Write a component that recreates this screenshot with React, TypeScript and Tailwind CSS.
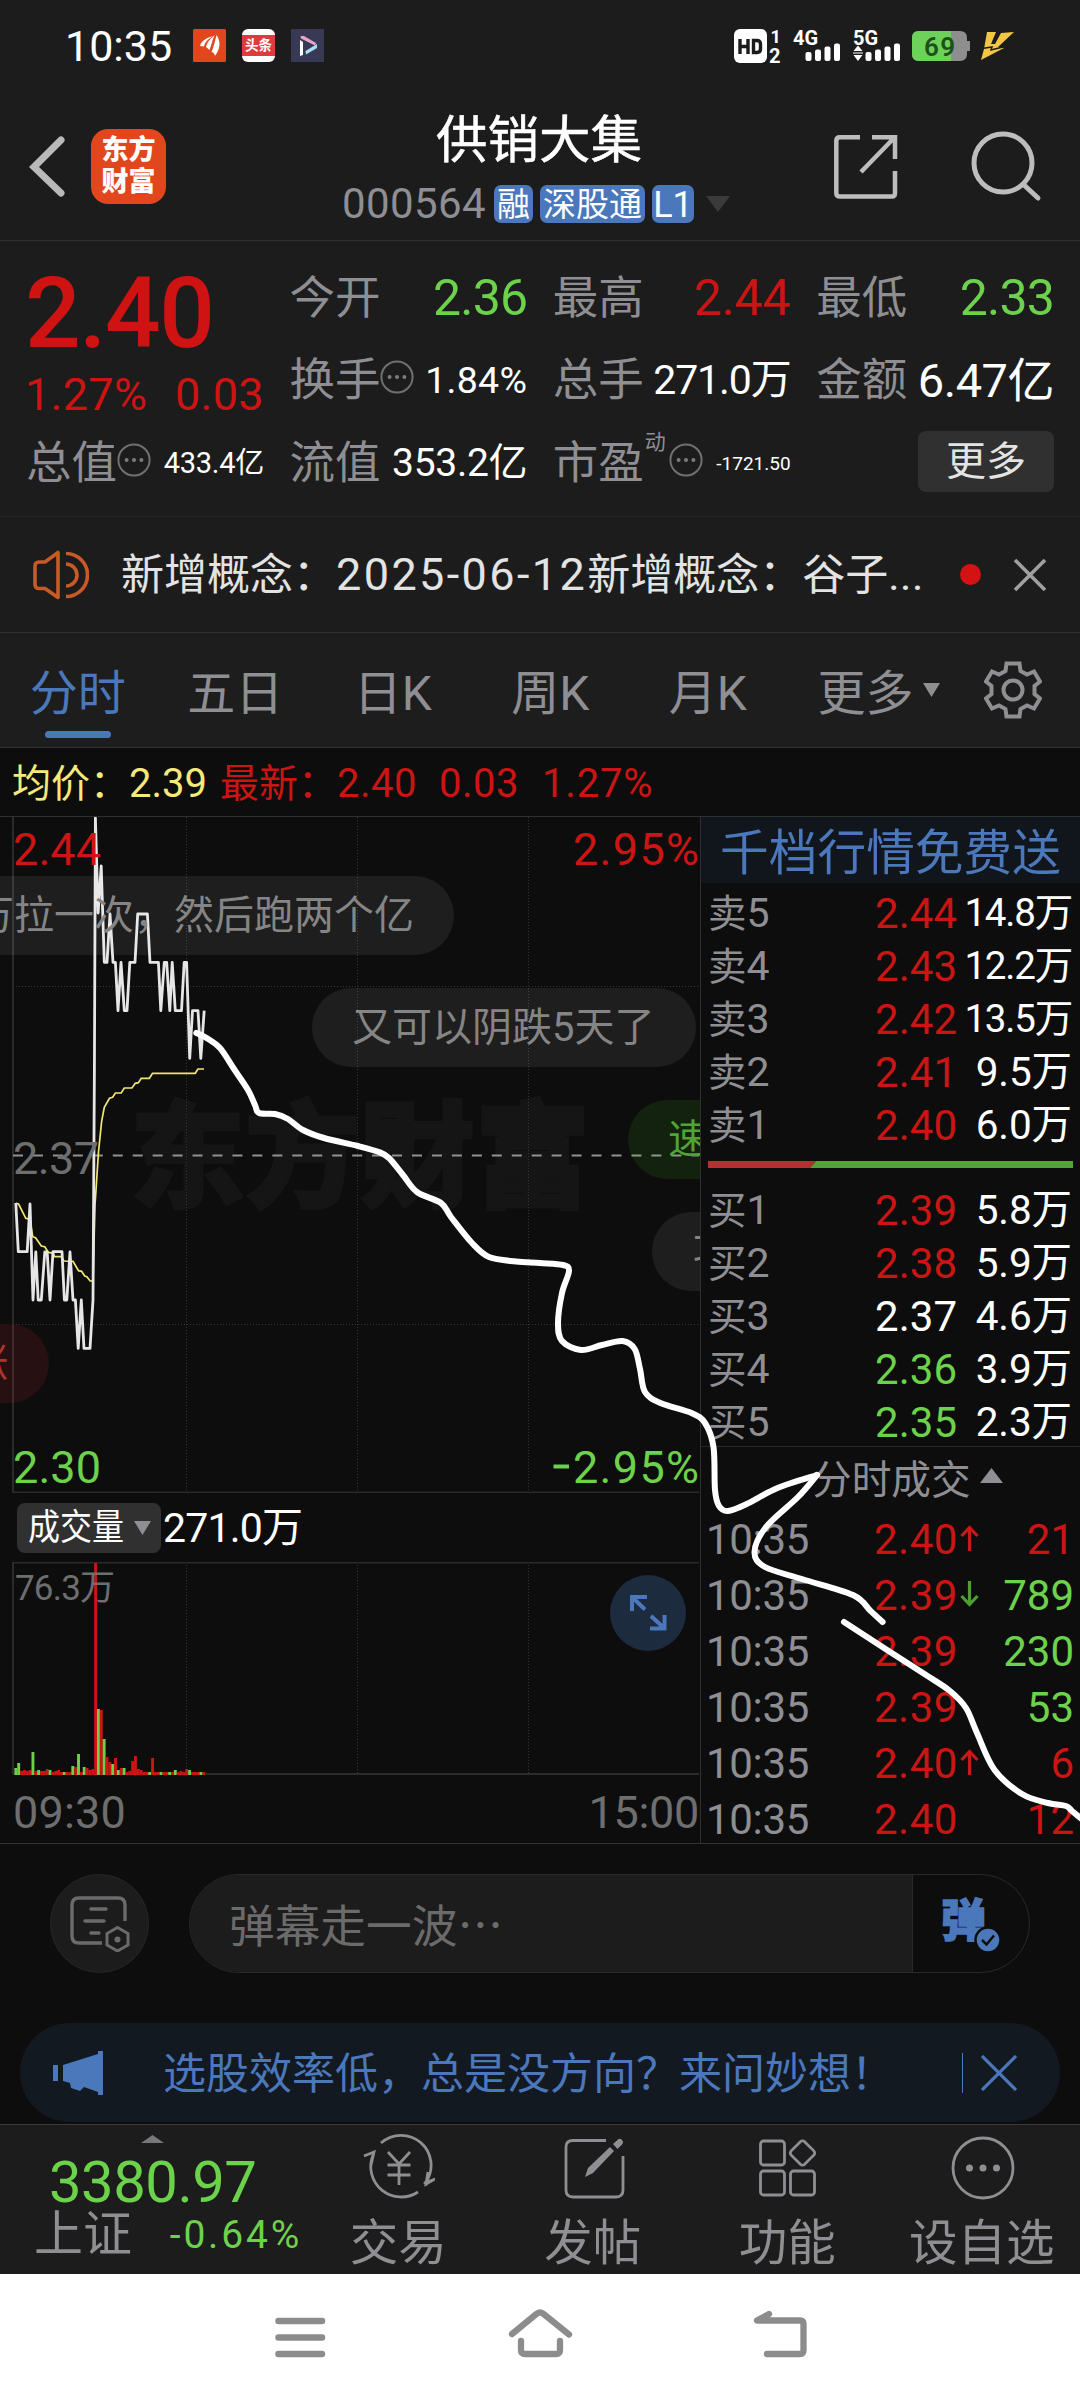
import React from 'react';

type Tone = 'red' | 'green' | 'white';

interface BookRow {
  label: string;
  price: string;
  volume: string;
  tone: Tone;
}

interface Trade {
  time: string;
  price: string;
  tone: Tone;
  dir?: 'up' | 'down';
  qty: string;
  qtyTone: Tone;
}

const toneClass: Record<Tone, string> = {
  red: 'text-[#cb1514]',
  green: 'text-[#6dd24b]',
  white: 'text-white',
};

const asks: BookRow[] = [
  { label: '卖5', price: '2.44', volume: '14.8万', tone: 'red' },
  { label: '卖4', price: '2.43', volume: '12.2万', tone: 'red' },
  { label: '卖3', price: '2.42', volume: '13.5万', tone: 'red' },
  { label: '卖2', price: '2.41', volume: '9.5万', tone: 'red' },
  { label: '卖1', price: '2.40', volume: '6.0万', tone: 'red' },
];

const bids: BookRow[] = [
  { label: '买1', price: '2.39', volume: '5.8万', tone: 'red' },
  { label: '买2', price: '2.38', volume: '5.9万', tone: 'red' },
  { label: '买3', price: '2.37', volume: '4.6万', tone: 'white' },
  { label: '买4', price: '2.36', volume: '3.9万', tone: 'green' },
  { label: '买5', price: '2.35', volume: '2.3万', tone: 'green' },
];

const trades: Trade[] = [
  { time: '10:35', price: '2.40', tone: 'red', dir: 'up', qty: '21', qtyTone: 'red' },
  { time: '10:35', price: '2.39', tone: 'red', dir: 'down', qty: '789', qtyTone: 'green' },
  { time: '10:35', price: '2.39', tone: 'red', qty: '230', qtyTone: 'green' },
  { time: '10:35', price: '2.39', tone: 'red', qty: '53', qtyTone: 'green' },
  { time: '10:35', price: '2.40', tone: 'red', dir: 'up', qty: '6', qtyTone: 'red' },
  { time: '10:35', price: '2.40', tone: 'red', qty: '12', qtyTone: 'red' },
];

const tabs = ['分时', '五日', '日K', '周K', '月K'];

const priceLine =
  '15.8,1203 18.3,1251.7 27.2,1251.7 30,1204 33,1300 35.8,1252 38.2,1300 41.3,1300 44.8,1252 47.2,1252 50,1300 53,1251.7 62,1251.7 64.4,1300 66.8,1300 70,1252 73,1300 75.4,1300 78.2,1348.3 81.3,1300 84,1348.3 90,1348.3 93,1300 94.4,1070 95.4,818 98.1,913 101.2,866 104.3,962.3 107,962.3 110,914 113,962.3 115.4,962.3 118,1010.7 121,962.3 124.3,1010.7 127,1010.7 129.8,962.3 135,962.3 137.7,914 147.4,914 150,962.3 158.4,962.3 160.8,1010.7 164.3,962.3 166.7,962.3 169.8,1010.7 172.2,962.3 175.3,1010.7 181.5,1010.7 184.2,962.3 186.6,962.3 189.7,1058.3 192.5,1010.7 198,1010.7 200.8,1058.3 204.2,1010.7';

const averageLine =
  '15.8,1203.3 18.6,1204 22.4,1211.7 25.8,1218.3 30,1219.3 32.7,1236.7 35.5,1237.7 41.3,1246 44.8,1246.7 48.2,1252.3 53.4,1253.3 54.4,1256.7 61.3,1256.7 64,1261 73,1261.3 78.5,1270.7 81.6,1271.3 84.7,1276 86.8,1276.7 90.2,1281 93,1281 95,1205 98.5,1152 101.6,1121.7 104.3,1107.3 109.5,1098.3 112.6,1097.3 115.4,1093 121.2,1093 124.3,1088 131.9,1088 135.3,1083.3 138.4,1082.7 141.2,1078.3 149.4,1078.3 152.5,1073.3 195.2,1073.3 198,1069 204,1069';

// [height, rising]
const volumes: [number, boolean][] = [
  [7, false], [12, false], [4, true], [5, true], [4, true], [5, true], [23, false], [4, true], [5, false], [4, true],
  [4, true], [6, true], [5, false], [3, true], [4, true], [5, true], [3, true], [3, false], [3, true], [3, true],
  [9, false], [8, true], [21, false], [3, true], [8, false], [7, true], [5, true], [6, true], [212, true], [66, false],
  [65, true], [36, false], [18, true], [13, true], [11, false], [17, true], [5, false], [7, true], [7, false], [3, true],
  [4, true], [14, true], [19, true], [6, true], [5, true], [3, true], [3, true], [3, false], [17, true], [3, true],
  [3, true], [3, false], [3, true], [3, true], [3, false], [3, true], [5, false], [3, true], [4, true], [3, true],
  [6, true], [5, false], [3, true], [3, true], [3, true], [3, false], [3, true],
];

const strokes: [number, number][][] = [
  [
    [196.3, 1033], [206.6, 1038], [220, 1048], [234, 1069], [248, 1090], [255, 1105], [259, 1113], [275, 1114],
    [288, 1119], [303, 1130], [324, 1138], [358, 1146], [379, 1152], [389, 1158], [403, 1175], [417, 1192],
    [441, 1203], [451, 1217], [472, 1243], [489, 1257], [516, 1261.5], [540, 1263], [563, 1265], [569, 1271],
    [562, 1293], [558, 1323], [562, 1341], [581, 1350], [602, 1345], [622.6, 1341], [634.7, 1349], [640, 1369],
    [645, 1392], [660.5, 1403], [691.5, 1413], [705, 1423], [713.5, 1447], [715, 1490], [719, 1506], [728, 1511],
    [746.6, 1504], [777.6, 1488], [817, 1475],
  ],
  [
    [817, 1475], [798, 1497], [766, 1527], [754.5, 1552], [765, 1567], [802, 1579], [853, 1595], [870.6, 1611],
    [882.6, 1622],
  ],
  [
    [844, 1622], [884, 1648], [926, 1675], [950, 1691], [966, 1708], [977, 1733], [994.6, 1770], [1022, 1794],
    [1048, 1803], [1066, 1806], [1072, 1811], [1084, 1821],
  ],
];

const smoothPath = (pts: [number, number][]) => {
  let d = `M${pts[0][0]} ${pts[0][1]}`;
  for (let i = 0; i < pts.length - 1; i++) {
    const p0 = pts[i - 1] || pts[i];
    const p1 = pts[i];
    const p2 = pts[i + 1];
    const p3 = pts[i + 2] || p2;
    d += ` C${p1[0] + (p2[0] - p0[0]) / 6} ${p1[1] + (p2[1] - p0[1]) / 6} ${p2[0] - (p3[0] - p1[0]) / 6} ${p2[1] - (p3[1] - p1[1]) / 6} ${p2[0]} ${p2[1]}`;
  }
  return d;
};

const MoreDots = () => (
  <svg className="w-[34px] h-[34px] shrink-0 mb-[7px]" viewBox="0 0 34 34" fill="none">
    <circle cx="17" cy="17" r="15.6" stroke="#707072" strokeWidth="2" />
    <circle cx="9.6" cy="17" r="2" fill="#7c7c7f" />
    <circle cx="17" cy="17" r="2" fill="#7c7c7f" />
    <circle cx="24.4" cy="17" r="2" fill="#7c7c7f" />
  </svg>
);

const Signal = ({ label, data }: { label: string; data?: boolean }) => (
  <svg className="w-[49px] h-[34px] overflow-visible" viewBox="0 0 49 34" fill="#fff">
    <text x="0" y="15.5" fontSize="20" fontWeight="700" fontFamily="Roboto, sans-serif">
      {label}
    </text>
    {data && <path d="M0.5 22 L5 16.5 L9.5 22 Z M0.5 26 L5 32 L9.5 26 Z M0 23.5 h10 v1 h-10 Z" />}
    <rect x="12.5" y="23" width="6" height="9" rx="2" />
    <rect x="22" y="20.5" width="6" height="11.5" rx="2" />
    <rect x="31.5" y="17.5" width="6" height="14.5" rx="2" />
    <rect x="41" y="14.5" width="6" height="17.5" rx="2" />
  </svg>
);

const StatusBar = () => (
  <div className="h-[91px] flex items-center pl-[65px] text-white">
    <div className="w-[128px] pt-0.5 text-[43px] leading-none">10:35</div>
    <div className="flex gap-4">
      <svg className="w-[33px] h-[33px]" viewBox="0 0 33 33">
        <rect width="33" height="33" rx="1.5" fill="#e2461c" />
        <path d="M7 17 C8 12 14 8.5 20 7 C15 10.5 12 12.5 11 17.5 Z" fill="#fff" />
        <path d="M13 18 C14 13 18 9 22 6 C19 11 19 15 16.5 21 Z" fill="#fff" />
        <path d="M18.5 23 C21 17 22 12 23.5 6 C27 11 28.5 18 22 27 C21.5 25 21 23.5 18.5 23 Z" fill="#fff" />
      </svg>
      <div className="w-[33px] h-[33px] rounded-[6px] bg-white flex items-center overflow-hidden">
        <div className="w-full h-[21px] bg-[#dc3c3e] text-[13.5px] leading-[20px] font-bold text-center">头条</div>
      </div>
      <svg className="w-[33px] h-[33px]" viewBox="0 0 33 33">
        <rect width="33" height="33" fill="#383a55" />
        <path d="M9 11 L12 13 V26 L9 27 Z" fill="#fff" />
        <path d="M9.5 7 L13 7 L25 14 L24 16.5 L10 9.5 Z" fill="#eaa3c8" />
        <path d="M14.5 22 L26 15 L26 19 L15 25.5 Z" fill="#a9dcf8" />
      </svg>
    </div>
    <div className="ml-auto mr-[65px] flex items-center">
      <svg className="w-[59px] h-[34px] overflow-visible" viewBox="0 0 59 34">
        <rect width="33" height="34" rx="6" fill="#fff" />
        <path
          d="M6 10 V25 M14 10 V25 M6 17.5 H14 M19.5 11.5 V23.5 H23 Q26.5 23.5 26.5 20 V15 Q26.5 11.5 23 11.5 Z"
          stroke="#1c1c1c"
          strokeWidth="3.4"
          fill="none"
        />
        <text x="36.5" y="14" fontSize="18" fontWeight="700" fill="#fff" fontFamily="Roboto, sans-serif">1</text>
        <text x="35" y="33.5" fontSize="20" fontWeight="700" fill="#fff" fontFamily="Roboto, sans-serif">2</text>
      </svg>
      <div className="w-[60px]"><Signal label="4G" /></div>
      <div className="w-[59px]"><Signal label="5G" data /></div>
      <svg className="w-[69px] h-[30px]" viewBox="0 0 69 30">
        <path d="M7 0 H48 Q55 0 55 7 V10 H58 V20 H55 V23 Q55 30 48 30 H7 Q0 30 0 23 V7 Q0 0 7 0 Z" fill="#8e8e8e" />
        <path d="M7 0 H39 V30 H7 Q0 30 0 23 V7 Q0 0 7 0 Z" fill="#6cd25a" />
        <text x="12" y="24.5" fontSize="26" fontWeight="600" fill="#20501a" textLength="31" fontFamily="Roboto, sans-serif">69</text>
      </svg>
      <svg className="w-[34px] h-[30px]" viewBox="0 0 34 30" fill="#f2c744">
        <path d="M6 1 H15 L10 13 H14 L20 2 L33 1 L17 16 L23 17 L0 29 L3 18 Z" />
        <path d="M1 17.5 L11 16 L10 19 L22 16" stroke="#1c1c1c" strokeWidth="1.5" fill="none" />
      </svg>
    </div>
  </div>
);

const Header = () => (
  <header className="h-[149px] shrink-0 flex items-start">
    <svg className="w-9 h-[62px] ml-[29px] mt-[45px]" viewBox="0 0 36 62" fill="none">
      <path d="M32 4 L5 31 L32 57" stroke="#b9b9b9" strokeWidth="7" strokeLinecap="round" />
    </svg>
    <div className="ml-[26px] mt-[38px] w-[75px] h-[75px] rounded-[17px] bg-[#e2461c] text-white font-black text-[27px] leading-[32px] text-center pt-[5px]">
      <div>东方</div>
      <div>财富</div>
    </div>
    <div className="ml-[166px] w-[412px] mt-[24px] flex flex-col items-center">
      <h1 className="text-[51.5px] leading-[52px] text-white mr-[-2px] [-webkit-text-stroke:0.5px_white]">供销大集</h1>
      <div className="flex items-center mt-[18px] h-[38px] -ml-[4px]">
        <span className="text-[42px] leading-none text-[#8e8e93] w-[152px] tracking-[0.4px]">000564</span>
        <span className="h-[38px] w-[39px] rounded-[7px] bg-[#4b77bb] text-white text-[33px] leading-[39px] text-center">融</span>
        <span className="ml-[7px] h-[38px] w-[105px] rounded-[7px] bg-[#4b77bb] text-white text-[33px] leading-[39px] text-center">深股通</span>
        <span className="ml-[7px] h-[38px] w-[42px] rounded-[7px] bg-[#4b77bb] text-white text-[36px] leading-[40px] text-center">L1</span>
        <svg className="ml-3 w-6 h-4" viewBox="0 0 24 16">
          <path d="M0 0 H24 L12 16 Z" fill="#3a3a3a" />
        </svg>
      </div>
    </div>
    <svg className="ml-[90px] mt-[44px] w-[64px] h-[64px] shrink-0" viewBox="0 0 64 64" fill="none" stroke="#bdbdbd" strokeWidth="4.5">
      <path d="M26 2.3 H6 Q2.3 2.3 2.3 6 V58 Q2.3 61.5 6 61.5 H58 Q61 61.5 61 58 V36" />
      <path d="M38 2.3 H61 V24 M60 3 L27 37" />
    </svg>
    <svg className="ml-[73px] mt-[40px] w-[72px] h-[72px] shrink-0" viewBox="0 0 72 72" fill="none" stroke="#bdbdbd" strokeWidth="5">
      <circle cx="32" cy="32" r="29" />
      <path d="M53 54 L67 67" strokeLinecap="round" />
    </svg>
  </header>
);

const QuoteCell = ({ label, mark, children }: { label: string; mark?: React.ReactNode; children?: React.ReactNode }) => (
  <div className="flex items-center h-[82.5px]">
    <span className="-ml-[2px] text-[45.5px] leading-none text-[#8e8e93] whitespace-nowrap">{label}</span>
    {mark}
    <span className="ml-auto whitespace-nowrap leading-none">{children}</span>
  </div>
);

const Quote = () => (
  <section className="h-[276px] shrink-0 border-t border-[#303030] pl-[28px] pr-[26px] pt-[16px]">
    <div className="grid grid-cols-4 gap-x-[27.5px]">
      <div className="row-span-2 text-[#cf1313]">
        <div className="text-[98px] leading-[98px] font-medium tracking-[-1.5px] mt-[8px] -ml-[3px]">2.40</div>
        <div className="flex justify-between text-[45px] leading-none mt-[9px] ml-[-3px] tracking-[0.3px]">
          <span>1.27%</span>
          <span>0.03</span>
        </div>
      </div>
      <QuoteCell label="今开"><span className="text-[50px] text-[#6dd24b] tracking-[-0.8px]">2.36</span></QuoteCell>
      <QuoteCell label="最高"><span className="text-[50px] text-[#cb1514] tracking-[-0.2px]">2.44</span></QuoteCell>
      <QuoteCell label="最低"><span className="text-[50px] text-[#6dd24b] tracking-[-0.8px]">2.33</span></QuoteCell>
      <QuoteCell label="换手" mark={<MoreDots />}><span className="text-[37.5px] text-white tracking-[0.3px]">1.84%</span></QuoteCell>
      <QuoteCell label="总手"><span className="text-[41px] text-white tracking-[-1.1px]">271.0万</span></QuoteCell>
      <QuoteCell label="金额"><span className="text-[47px] text-white tracking-[-0.5px]">6.47亿</span></QuoteCell>
      <QuoteCell label="总值" mark={<MoreDots />}><span className="text-[29px] text-white tracking-[-0.3px]">433.4亿</span></QuoteCell>
      <QuoteCell label="流值"><span className="text-[39px] text-white tracking-[-0.3px]">353.2亿</span></QuoteCell>
      <QuoteCell
        label="市盈"
        mark={
          <>
            <span className="self-start mt-[10px] ml-px text-[21px] leading-none text-[#8e8e93] w-[24px]">动</span>
            <MoreDots />
          </>
        }
      >
        <span className="text-[19px] text-white">-1721.50</span>
      </QuoteCell>
      <div className="flex items-center justify-end">
        <button className="mb-[4px] w-[136px] h-[61px] rounded-[8px] bg-[#303030] text-[#e3e3e3] text-[40px] leading-[61px]">更多</button>
      </div>
    </div>
  </section>
);

const NewsBar = () => (
  <section className="h-[116px] shrink-0 border-t border-[#262626] flex items-center pl-[33px] text-[#e3e3e3]">
    <svg className="w-[56px] h-[50px] shrink-0" viewBox="0 0 56 50" fill="none" stroke="#c85a26" strokeWidth="3.6">
      <path d="M25 2.5 V47.5 L12 38.5 H6 Q2 38.5 2 34.5 V16 Q2 12 6 12 H12 Z" strokeLinejoin="round" />
      <path d="M33 14 A11 11 0 0 1 33 36 M33 3.5 A21.5 21.5 0 0 1 33 46.5" />
    </svg>
    <div className="ml-[32px] text-[43px] leading-none whitespace-nowrap flex items-baseline">
      <span>新增概念：</span>
      <span className="text-[45px] tracking-[2.4px]">2025-06-12</span>
      <span>新增概念：谷子</span>
      <span className="tracking-[0.5px]">...</span>
    </div>
    <span className="absolute left-[960px] w-[21px] h-[21px] rounded-full bg-[#d31313]" />
    <svg className="absolute left-[1013px] w-[34px] h-[34px]" viewBox="0 0 34 34" stroke="#a0a0a0" strokeWidth="3.6">
      <path d="M2 2 L32 32 M32 2 L2 32" />
    </svg>
  </section>
);

const TabBar = () => (
  <nav className="h-[115px] shrink-0 border-t border-[#303030] flex bg-[#1d1d1d] text-[48px] leading-none text-[#8e8e93]">
    {tabs.map((tab, i) => (
      <div
        key={tab}
        className={`w-[157.5px] -ml-px mr-px flex flex-col items-center pt-[37px] ${i === 0 ? 'text-[#4b77bb]' : ''}`}
      >
        <span>{tab}</span>
        {i === 0 && <span className="mt-[13px] h-[7px] w-[66px] rounded-full bg-[#4b77bb]" />}
      </div>
    ))}
    <div className="ml-[30px] flex items-start pt-[37px]">
      更多
      <svg className="ml-[9px] mt-[13px] w-[17px] h-[14px]" viewBox="0 0 17 14">
        <path d="M0 0 H17 L8.5 14 Z" fill="#8e8e93" />
      </svg>
    </div>
    <svg className="ml-[44px] mt-[28px] w-[58px] h-[58px]" viewBox="0 0 58 58" fill="none" stroke="#8e8e93" strokeWidth="4">
      <path d="M22.5 2.5 H35.5 L36.5 10 L43 13.5 L50 10.5 L56 20.5 L50.5 25 V33 L56 37.5 L50 47.5 L43 44.5 L36.5 48 L35.5 55.5 H22.5 L21.5 48 L15 44.5 L8 47.5 L2 37.5 L7.5 33 V25 L2 20.5 L8 10.5 L15 13.5 L21.5 10 Z" />
      <circle cx="29" cy="29" r="9.5" />
    </svg>
  </nav>
);

const Bullet = ({ className, children }: { className: string; children: React.ReactNode }) => (
  <div className={`absolute h-[79px] rounded-full text-[40px] leading-[80px] whitespace-nowrap ${className}`}>{children}</div>
);

const PriceChart = () => (
  <div className="relative h-[676px] w-[700px] overflow-hidden">
    <svg className="w-[700px] h-[676px]" viewBox="0 817 700 676" fill="none" fontFamily="Roboto, sans-serif">
      <text x="130" y="1198" fontSize="115" fontWeight="900" fill="#151515" stroke="#151515" strokeWidth="3" fontFamily="'Noto Sans CJK SC', sans-serif">
        东方财富
      </text>
      <g stroke="#363636" strokeDasharray="1 2">
        <path d="M186.5 817 V1492 M357.5 817 V1492 M528.5 817 V1492 M13 986.5 H699 M13 1324.5 H699" />
      </g>
      <path d="M13 817 V1492.5 H699" stroke="#2b2b2b" strokeWidth="2" />
      <path d="M13 1155.5 H699" stroke="#929292" strokeWidth="2" strokeDasharray="10 9.95" />
      <polyline points={averageLine} stroke="#f2e673" strokeWidth="1.7" />
      <polyline points={priceLine} stroke="#e6e6e6" strokeWidth="2.8" strokeLinejoin="round" />
      <g fontSize="45">
        <text x="13" y="864.5" fill="#cb1514" textLength="88">2.44</text>
        <text x="573" y="864.5" fill="#cb1514" textLength="126">2.95%</text>
        <text x="13" y="1174" fill="#6e6e6e" textLength="86">2.37</text>
        <text x="13" y="1483" fill="#6dd24b" textLength="88">2.30</text>
        <text x="573" y="1483" fill="#6dd24b" textLength="126">2.95%</text>
        <rect x="553.5" y="1464.5" width="15.5" height="4" fill="#6dd24b" />
      </g>
    </svg>
    <Bullet className="top-[59px] right-[246px] pr-[40px] pl-10 bg-white/7 text-[#858585]">万拉一次，然后跑两个亿</Bullet>
    <Bullet className="top-[171px] left-[312px] w-[384px] pl-[40px] bg-white/7 text-[#858585]">又可以阴跌5天了</Bullet>
    <Bullet className="top-[283px] left-[628px] w-[120px] pl-[40px] bg-[#52dc28]/10 text-[#52a234]">速</Bullet>
    <Bullet className="top-[395px] left-[652px] w-[120px] pl-[41px] bg-white/7 text-[#858585]">功</Bullet>
    <Bullet className="top-[507px] right-[651px] pr-[41px] pl-10 bg-[#e02830]/12 text-[#b03330]">涨</Bullet>
  </div>
);

const VolumePanel = () => (
  <>
    <div className="h-[69px] flex items-center pl-[17px] text-white">
      <div className="w-[144px] h-[50px] rounded-[8px] bg-[#303030] flex items-center pl-[11px]">
        <span className="w-[106px] text-[36px] leading-none whitespace-nowrap origin-left scale-x-[0.89]">成交量</span>
        <svg className="w-[17px] h-[14px]" viewBox="0 0 17 14">
          <path d="M0 0 H17 L8.5 14 Z" fill="#8e8e93" />
        </svg>
      </div>
      <span className="ml-[2px] pt-0.5 text-[41px] leading-none tracking-[-0.8px]">271.0万</span>
    </div>
    <div className="relative h-[213px]">
      <svg className="w-[700px] h-[213px]" viewBox="0 1562 700 213" fill="none" fontFamily="Roboto, 'Noto Sans CJK SC', sans-serif">
        <g stroke="#363636" strokeDasharray="1 2">
          <path d="M186.5 1562 V1774 M357.5 1562 V1774 M528.5 1562 V1774" />
        </g>
        <path d="M13 1774.5 V1562.5 H699 M13 1774 H699" stroke="#2b2b2b" strokeWidth="2" />
        {volumes.map(([h, rising], i) => (
          <rect key={i} x={14.4 + i * 2.848} y={1775 - h} width="2.9" height={h} fill={rising ? '#cf1414' : '#6fcf4a'} />
        ))}
        <text x="15" y="1599.5" fontSize="35" fill="#6e6e6e" textLength="100">76.3万</text>
      </svg>
      <svg className="absolute left-[610px] top-[13px] w-[76px] h-[76px]" viewBox="0 0 76 76" fill="none" stroke="#4b77bb" strokeWidth="4">
        <circle cx="38" cy="38" r="38" fill="#1d2b3e" stroke="none" />
        <path d="M37 22 H22 V36 M22.5 22.5 L35 34.5 M40 53.5 H54.5 V40 M54 53 L41 41" />
      </svg>
    </div>
    <div className="h-[68px] flex items-center justify-between pl-[13px] pr-[1px] pt-[7px] text-[45px] leading-none text-[#6e6e6e]">
      <span className="tracking-[0.2px]">09:30</span>
      <span className="tracking-[-0.3px]">15:00</span>
    </div>
  </>
);

const BookLine = ({ row }: { row: BookRow }) => (
  <div className="h-[53px] flex items-center leading-none pl-[7px] pr-[8px]">
    <span className="w-[80px] text-[41px] text-[#8e8e93]">
      <span className="text-[38.5px]">{row.label[0]}</span>
      {row.label[1]}
    </span>
    <span className={`ml-auto text-[42px] ${toneClass[row.tone]}`}>{row.price}</span>
    <span
      className={`w-[115px] text-right text-white whitespace-nowrap ${
        row.volume.length > 4 ? 'text-[38.5px] tracking-[-1.2px]' : 'text-[40.5px] tracking-[-0.1px]'
      }`}
    >
      {row.volume}
    </span>
  </div>
);

const TradeArrow = ({ dir }: { dir: 'up' | 'down' }) => (
  <svg className={`w-[19px] h-[26px] -mt-1 ${dir === 'down' ? 'rotate-180' : ''}`} viewBox="0 0 19 26" fill="none" stroke={dir === 'up' ? '#c61a1a' : '#4f9e34'} strokeWidth="3.2">
    <path d="M9.5 26 V3 M1.5 11 L9.5 2.5 L17.5 11" />
  </svg>
);

const OrderBook = () => (
  <aside className="w-[380px] h-[1026px] border-l border-[#303030] overflow-hidden">
    <div className="h-[66px] bg-[#11161c] text-[#4b77bb] text-[48.7px] leading-[73px] text-center">千档行情免费送</div>
    <div className="h-[563px] pt-[4px]">
      {asks.map(row => <BookLine key={row.label} row={row} />)}
      <svg className="mt-[9px] mb-[16px] ml-[7px] w-[365px] h-[7px]" viewBox="0 0 365 7">
        <path d="M0 0 H108 L102 7 H0 Z" fill="#b03331" />
        <path d="M108 0 H365 V7 H102 Z" fill="#55a237" />
      </svg>
      {bids.map(row => <BookLine key={row.label} row={row} />)}
    </div>
    <div className="h-[65px] border-t border-[#262626] flex items-center pl-[111px] pt-[3px] text-[39.7px] leading-none text-[#8e8e93]">
      分时成交
      <svg className="ml-[9px] w-[23px] h-[15px] -mt-[11px]" viewBox="0 0 23 15">
        <path d="M11.5 0 L23 15 H0 Z" fill="#8e8e93" />
      </svg>
    </div>
    {trades.map((t, i) => (
      <div key={i} className="h-[56px] flex items-center pl-[5px] pr-[6px] pt-[2px] text-[42px] leading-none">
        <span className="w-[168px] text-[#8e8e93] tracking-[-0.3px]">{t.time}</span>
        <span className={`w-[86px] tracking-[0.5px] ${toneClass[t.tone]}`}>{t.price}</span>
        {t.dir && <TradeArrow dir={t.dir} />}
        <span className={`ml-auto ${toneClass[t.qtyTone]}`}>{t.qty}</span>
      </div>
    ))}
  </aside>
);

const CommentBar = () => (
  <section className="h-[180px] shrink-0 border-t border-[#333] flex items-start pl-[50px] pt-[30px]">
    <div className="w-[99px] h-[99px] rounded-full bg-[#1c1c1c] border border-[#262626] flex items-center justify-center">
      <svg className="w-[60px] h-[56px]" viewBox="0 0 60 56" fill="none" stroke="#6b6b6e" strokeWidth="3.4">
        <path d="M32 47 H9 Q2 47 2 40 V9 Q2 2 9 2 H48 Q55 2 55 9 V25" />
        <path d="M21 13 H36 M15 25 H34 M21 37 H29" strokeLinecap="round" />
        <path d="M47.5 31.5 L58 37.5 V49 L47.5 55 L37 49 V37.5 Z" strokeWidth="3" />
        <circle cx="47.5" cy="43.5" r="3" fill="#6b6b6e" stroke="none" />
      </svg>
    </div>
    <div className="ml-10 w-[841px] h-[99px] rounded-full border border-[#292929] flex overflow-hidden">
      <div className="w-[723px] bg-[#1c1c1c] border-r border-[#292929] pl-[39px] text-[45.7px] leading-[96px] text-[#6b6b6b] font-['Noto_Sans_CJK_SC',sans-serif]">
        弹幕走一波⋯
      </div>
      <div className="relative pl-[28px] text-[45px] leading-[93px] font-black text-[#4b77bb] [-webkit-text-stroke:1.5px_#4b77bb]">
        弹
        <svg className="absolute left-[61px] top-[51px] w-[28px] h-[28px]" viewBox="0 0 28 28" fill="none">
          <circle cx="14" cy="14" r="12.5" fill="#4b77bb" stroke="#0d0d0d" strokeWidth="2.5" />
          <path d="M8 14 L12.5 18.5 L20 9.5" stroke="#0d0d0d" strokeWidth="2.5" />
        </svg>
      </div>
    </div>
  </section>
);

const PromoBanner = () => (
  <div className="h-[101px] shrink-0 px-5">
    <div className="h-[99px] rounded-full bg-[#131921] flex items-center pl-[33px] text-[#4b77bb]">
      <svg className="w-[50px] h-[44px]" viewBox="0 0 50 44" fill="#4b77bb">
        <path d="M0 14 H5 V30 H0 Z M10 14 L45 3 V0 H50 V44 H45 V41 L31 36 L27 40 L18 37 L17 32 L10 30 Z" />
      </svg>
      <span className="ml-[60px] mb-[5px] text-[43px] leading-none whitespace-nowrap font-['Noto_Sans_CJK_SC',sans-serif]">选股效率低，总是没方向？来问妙想！</span>
      <span className="absolute left-[962px] h-10 w-px bg-[#4b77bb]" />
      <svg className="absolute left-[981px] w-9 h-9" viewBox="0 0 36 36" stroke="#4b77bb" strokeWidth="3.2">
        <path d="M1 1 L35 35 M35 1 L1 35" />
      </svg>
    </div>
  </div>
);

const NavItem = ({ label, children }: { label: string; children: React.ReactNode }) => (
  <div className="w-[194.5px] flex flex-col items-center pt-[7px]">
    <svg className="w-[72px] h-[72px]" viewBox="0 0 72 72" fill="none" stroke="#8e8e93" strokeWidth="2.8">
      {children}
    </svg>
    <span className="mt-[16px] -ml-[2px] text-[48.5px] leading-none text-[#8e8e93]">{label}</span>
  </div>
);

const BottomNav = () => (
  <footer className="h-[150px] shrink-0 border-t border-[#3a3a3a] bg-[#1c1c1c] flex">
    <div className="w-[302px] relative pt-[28px] pl-[34px]">
      <svg className="absolute left-[141px] top-[10px] w-[23px] h-2" viewBox="0 0 23 8">
        <path d="M11.5 0 L23 8 H0 Z" fill="#78787b" />
      </svg>
      <div className="ml-[15px] text-[58px] leading-[58px] text-[#6dd24b] tracking-[-0.5px]">3380.97</div>
      <div className="flex items-center">
        <span className="text-[49px] leading-[48px] text-[#8e8e93] w-[137px]">上证</span>
        <span className="text-[39px] leading-[48px] text-[#6dd24b] tracking-[2.8px]">-0.64%</span>
      </div>
    </div>
    <NavItem label="交易">
      <path d="M18 11 A30 30 0 0 1 63 50 M64.5 53 L61 50 M62 51 L72 47 L63 52 L65 40" />
      <path d="M55 60 A30.5 30.5 0 0 1 10 23 M1 24 L11 20 L8 33" />
      <path d="M25 20 L36 32 L47 20 M36 32 V53 M24.5 33 H47.5 M24.5 43 H47.5" />
    </NavItem>
    <NavItem label="发帖">
      <path d="M48 8.5 H15 Q8 8.5 8 15 V58 Q8 65 15 65 H58 Q65 65 65 58 V24" />
      <path d="M27 45 L30 36 L52 15 L56 19 L35 41 Z M55 12 L60 7.5 Q62 6 64 8 Q66 10 64.5 12 L59.5 17 Z" fill="#8e8e93" stroke="none" />
    </NavItem>
    <NavItem label="功能">
      <rect x="8.5" y="9" width="24" height="24" rx="3" />
      <rect x="8.5" y="39" width="24" height="24" rx="3" />
      <rect x="38.5" y="39" width="24" height="24" rx="3" />
      <rect x="41" y="11.5" width="19" height="19" rx="3" transform="rotate(45 50.5 21)" />
    </NavItem>
    <NavItem label="设自选">
      <circle cx="36" cy="36" r="30" />
      <g fill="#8e8e93" stroke="none">
        <circle cx="22.5" cy="36" r="3.5" />
        <circle cx="36" cy="36" r="3.5" />
        <circle cx="49.5" cy="36" r="3.5" />
      </g>
    </NavItem>
  </footer>
);

const SystemNav = () => (
  <div className="h-[126px] shrink-0 bg-white flex items-start pt-[34px] pl-[270px]">
    <svg className="w-[60px] h-[54px]" viewBox="270 2308 60 54" stroke="#8c8c8c" strokeWidth="6.5" strokeLinecap="round">
      <path d="M278.5 2321 H322 M278.5 2337.5 H322 M278.5 2354 H322" />
    </svg>
    <svg className="ml-[170px] w-[80px] h-[54px]" viewBox="500 2308 80 54" fill="none" stroke="#8c8c8c" strokeWidth="6.3" strokeLinecap="round" strokeLinejoin="round">
      <path d="M512 2334 L537 2313.5 Q540 2311.5 543 2313.5 L569 2334.5 M521 2341 V2350 Q521 2354 525 2354 H556 Q560 2354 560 2350 V2341" />
    </svg>
    <svg className="ml-[170px] w-[60px] h-[54px]" viewBox="750 2308 60 54" fill="none" stroke="#8c8c8c" strokeWidth="6.3" strokeLinecap="round" strokeLinejoin="round">
      <path d="M769 2314 L757 2320.5 H800 Q803.5 2320.5 803.5 2324 V2350 Q803.5 2354 800 2354 H767" />
    </svg>
  </div>
);

export default function App() {
  return (
    <div
      lang="zh-CN"
      className="relative w-[1080px] h-[2400px] overflow-hidden flex flex-col bg-[#1c1c1c] font-[Roboto,'Noto_Sans_CJK_SC',sans-serif]"
    >
      <StatusBar />
      <Header />
      <Quote />
      <NewsBar />
      <TabBar />
      <main className="bg-[#0d0d0d] shrink-0">
        <div className="h-[70px] border-y border-[#303030] flex items-center pl-[12px] pt-[3px] text-[40px] leading-none text-[#cb1514]">
          <span className="w-[208px] text-[#f5e97a]"><span className="text-[39px]">均价：</span>2.39</span>
          <span className="w-[219px]"><span className="text-[39px]">最新：</span><span className="tracking-[0.5px]">2.40</span></span>
          <span className="w-[103px] tracking-[0.5px]">0.03</span>
          <span className="tracking-[0.8px]">1.27%</span>
        </div>
        <div className="flex">
          <div className="w-[700px]">
            <PriceChart />
            <VolumePanel />
          </div>
          <OrderBook />
        </div>
        <CommentBar />
        <PromoBanner />
      </main>
      <BottomNav />
      <SystemNav />

      {/* freehand marker drawn over the whole screen */}
      <svg className="absolute inset-0 w-[1080px] h-[2400px] pointer-events-none" viewBox="0 0 1080 2400" fill="none">
        {strokes.map((pts, i) => (
          <path key={i} d={smoothPath(pts)} stroke="#fff" strokeWidth="6" strokeLinecap="round" strokeLinejoin="round" />
        ))}
      </svg>
    </div>
  );
}
